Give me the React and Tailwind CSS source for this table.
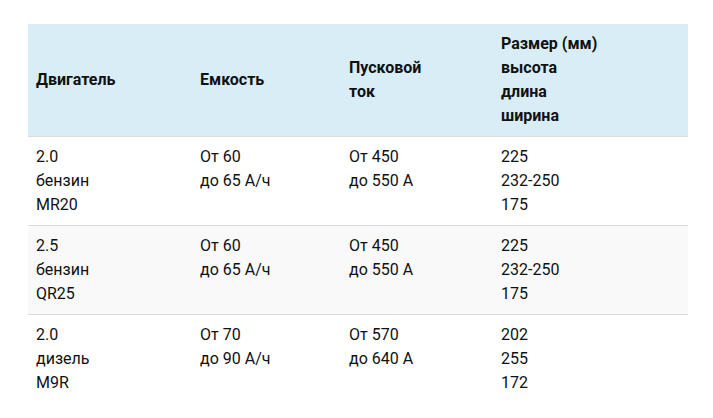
const rows = [
  { engine: ['2.0', 'бензин', 'MR20'], cap: ['От 60', 'до 65 А/ч'], cur: ['От 450', 'до 550 А'], size: ['225', '232-250', '175'] },
  { engine: ['2.5', 'бензин', 'QR25'], cap: ['От 60', 'до 65 А/ч'], cur: ['От 450', 'до 550 А'], size: ['225', '232-250', '175'] },
  { engine: ['2.0', 'дизель', 'M9R'], cap: ['От 70', 'до 90 А/ч'], cur: ['От 570', 'до 640 А'], size: ['202', '255', '172'] },
]

const Lines = ({ items }) => (
  <>
    {items.map((t, i) => (
      <div key={i}>{t}</div>
    ))}
  </>
)

export default function App() {
  return (
    <div className="min-h-[418px] bg-white pt-6 pl-7 pr-[25px] font-['Roboto',sans-serif] text-base leading-6 text-[#111]">
      <table className="w-full table-fixed border-collapse">
        <colgroup>
          <col className="w-[164px]" />
          <col className="w-[149px]" />
          <col className="w-[152px]" />
          <col />
        </colgroup>
        <thead>
          <tr className="bg-[#d9edf7] border-b border-[#ddd]">
            <th className="p-2 text-left align-middle font-bold">Двигатель</th>
            <th className="p-2 text-left align-middle font-bold">Емкость</th>
            <th className="p-2 text-left align-middle font-bold">
              <Lines items={['Пусковой', 'ток']} />
            </th>
            <th className="p-2 text-left align-middle font-bold">
              <Lines items={['Размер (мм)', 'высота', 'длина', 'ширина']} />
            </th>
          </tr>
        </thead>
        <tbody>
          {rows.map((r, i) => (
            <tr key={i} className={`${i > 0 ? 'border-t border-[#ddd]' : ''} ${i === 1 ? 'bg-[#f9f9f9]' : ''}`}>
              <td className="p-2 align-top"><Lines items={r.engine} /></td>
              <td className="p-2 align-top"><Lines items={r.cap} /></td>
              <td className="p-2 align-top"><Lines items={r.cur} /></td>
              <td className="p-2 align-top"><Lines items={r.size} /></td>
            </tr>
          ))}
        </tbody>
      </table>
    </div>
  )
}
